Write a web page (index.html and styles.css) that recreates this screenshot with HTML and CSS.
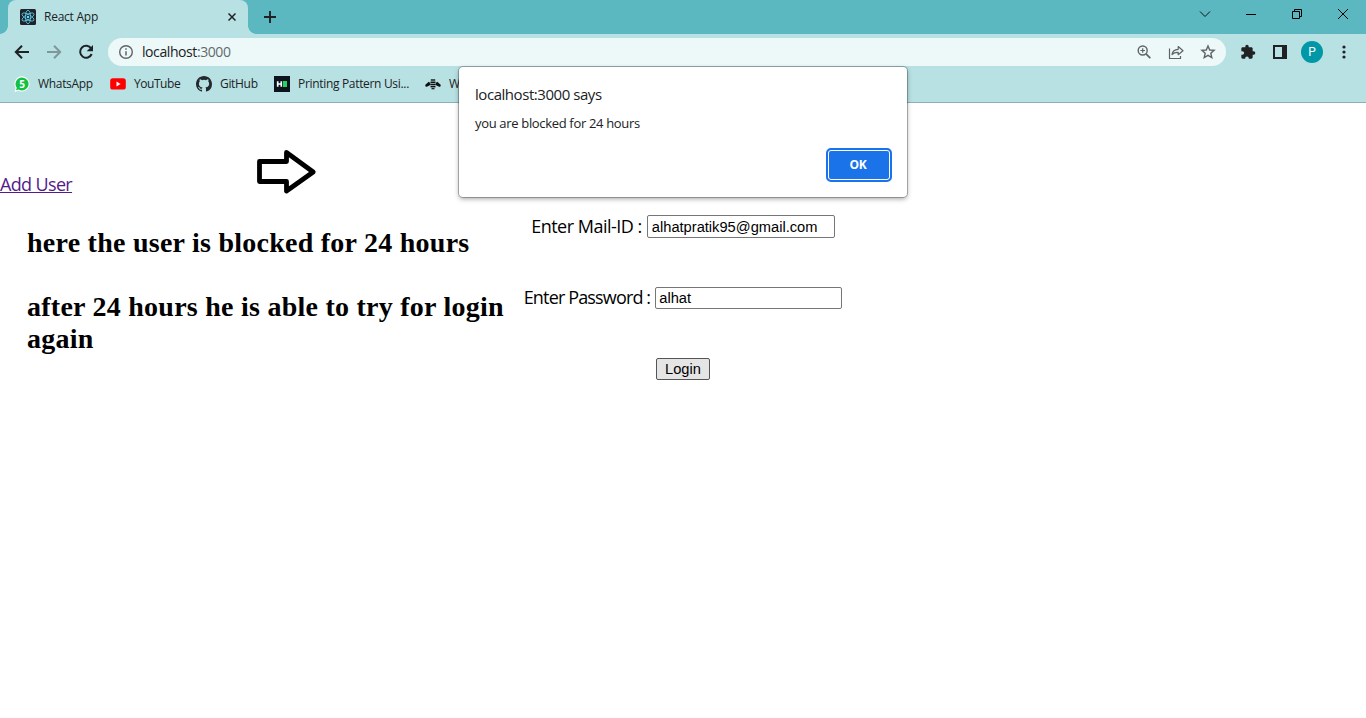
FILE: index.html
```html
<!DOCTYPE html>
<html lang="en">
<head>
<meta charset="utf-8">
<title>React App</title>
<link rel="stylesheet" href="styles.css">
</head>
<body>
<header class="browser">
  <div class="tabstrip">
    <div class="tab">
      <svg class="favicon" width="16" height="16" viewBox="0 0 16 16"><rect width="16" height="16" rx="1.5" fill="#20232a"/><g fill="none" stroke="#61dafb" stroke-width=".75"><ellipse cx="8" cy="8" rx="6.700" ry="2.600" transform="rotate(30 8 8)"/><ellipse cx="8" cy="8" rx="6.700" ry="2.600" transform="rotate(90 8 8)"/><ellipse cx="8" cy="8" rx="6.700" ry="2.600" transform="rotate(150 8 8)"/></g><circle cx="8" cy="8" r="1.300" fill="#61dafb"/></svg>
      <span class="tab-title">React App</span>
      <svg class="tab-close" width="8" height="8" viewBox="0 0 8 8"><path d="M.5.5l7 7M7.5.5l-7 7" stroke="#202124" stroke-width="1.5"/></svg>
    </div>
    <svg class="new-tab" width="12" height="12" viewBox="0 0 12 12"><path d="M6 0v12M0 6h12" stroke="#202124" stroke-width="1.9"/></svg>
    <div class="window-controls">
      <svg width="12" height="12" viewBox="0 0 12 12"><path d="M1 3.5l5 5 5-5" fill="none" stroke="#111"/></svg>
      <svg width="12" height="12" viewBox="0 0 12 12"><path d="M1 6.5h10" stroke="#000"/></svg>
      <svg width="12" height="12" viewBox="0 0 12 12"><path d="M1.500 3.500h7v7h-7zM3.500 3.500v-2h7v7h-2" fill="none" stroke="#000"/></svg>
      <svg width="12" height="12" viewBox="0 0 12 12"><path d="M1 1l10 10M11 1L1 11" stroke="#000"/></svg>
    </div>
  </div>
  <div class="toolbar">
    <svg class="back" width="16" height="16" viewBox="0 0 16 16"><path d="M15 8H2.200M8 1.700L1.800 8 8 14.300" fill="none" stroke="#202124" stroke-width="2"/></svg>
    <svg class="forward" width="16" height="16" viewBox="0 0 16 16"><path d="M1 8h12.800M8 1.700L14.200 8 8 14.300" fill="none" stroke="#7f979a" stroke-width="2"/></svg>
    <svg class="reload" width="16" height="16" viewBox="0 0 16 16"><path d="M13.200 4.500A6 6 0 1 0 13.700 10" fill="none" stroke="#202124" stroke-width="2"/><path d="M15 1v6.300H8.700z" fill="#202124"/></svg>
    <div class="omnibox">
      <svg width="14" height="14" viewBox="0 0 14 14"><circle cx="7" cy="7" r="6.300" fill="none" stroke="#5f6368" stroke-width="1.400"/><path d="M7 6.200v4.300M7 3.300v1.500" stroke="#5f6368" stroke-width="1.500"/></svg>
      <span class="url">localhost<span class="port">:3000</span></span>
      <div class="omni-actions">
        <svg width="14" height="14" viewBox="0 0 14 14"><g fill="none" stroke="#5f6368"><circle cx="5.700" cy="5.500" r="4.500" stroke-width="1.400"/><path d="M9 8.800l4.300 4.300" stroke-width="1.700"/><path d="M5.700 3.200v4.600M3.400 5.500H8" stroke-width="1.200"/></g></svg>
        <svg width="16" height="14" viewBox="0 0 16 14"><path d="M1.500 3.500v10h11v-2.500M4 9.500c.5-3.300 2.500-5 6.200-5.200V1.500L15 5.700l-4.800 4V7.300C7.700 7.200 5.500 7.800 4 9.500z" fill="none" stroke="#5f6368" stroke-width="1.200" stroke-linejoin="round"/></svg>
        <svg width="16" height="16" viewBox="0 0 16 16"><path d="M8 2l1.700 4 4.400.4-3.300 2.900 1 4.200L8 11.300l-3.800 2.200 1-4.200-3.300-2.900L6.300 6z" fill="none" stroke="#5f6368" stroke-width="1.400"/></svg>
      </div>
    </div>
    <svg class="extensions" width="16" height="16" viewBox="0 0 24 24"><path fill="#202124" d="M20.500 11H19V7c0-1.100-.9-2-2-2h-4V3.500a2.500 2.500 0 0 0-5 0V5H4c-1.100 0-2 .9-2 2v3.800h1.500a2.700 2.700 0 0 1 0 5.400H2V20c0 1.100.9 2 2 2h3.800v-.5a2.700 2.700 0 0 1 5.400 0v.5H17c1.100 0 2-.9 2-2v-4h1.500a2.500 2.500 0 0 0 0-5z"/></svg>
    <svg class="side-panel" width="14" height="14" viewBox="0 0 14 14"><path fill="#202124" fill-rule="evenodd" d="M0 0h14v14H0zM2 2v10h7V2z"/></svg>
    <span class="avatar">P</span>
    <svg class="kebab" width="4" height="14" viewBox="0 0 4 14"><g fill="#202124"><circle cx="2" cy="2" r="1.600"/><circle cx="2" cy="7" r="1.600"/><circle cx="2" cy="12" r="1.600"/></g></svg>
  </div>
  <nav class="bookmarks">
    <span class="bookmark whatsapp"><svg width="16" height="16" viewBox="0 0 16 16"><path d="M8 .3a7.600 7.600 0 1 1-3.500 14.400L.5 16l1.200-4A7.600 7.600 0 0 1 8 .3z" fill="#fff"/><path d="M8 1.500a6.500 6.500 0 1 1-3.400 12L2 14.300l.8-2.500A6.500 6.500 0 0 1 8 1.500z" fill="#12c143"/><text x="8" y="11.800" class="badge-digit">5</text></svg><span>WhatsApp</span></span>
    <span class="bookmark youtube"><svg width="16" height="16" viewBox="0 0 16 16"><rect x=".2" y="2.300" width="15.600" height="11.200" rx="2.600" fill="#f00"/><path d="M6.500 5.600v4.800L10.600 8z" fill="#fff"/></svg><span>YouTube</span></span>
    <span class="bookmark github"><svg width="16" height="16" viewBox="0 0 16 16"><path fill="#24292f" d="M8 0C3.580 0 0 3.580 0 8c0 3.540 2.290 6.530 5.470 7.590.4.070.55-.17.55-.38 0-.19-.01-.82-.01-1.490-2.010.37-2.530-.49-2.690-.94-.09-.23-.48-.94-.82-1.130-.28-.15-.68-.52-.01-.53.63-.01 1.080.58 1.230.82.72 1.210 1.870.87 2.330.66.070-.52.28-.87.51-1.070-1.780-.2-3.640-.89-3.640-3.950 0-.87.31-1.590.82-2.150-.08-.2-.36-1.020.08-2.120 0 0 .67-.21 2.200.82a7.700 7.700 0 0 1 4 0c1.530-1.040 2.200-.82 2.200-.82.44 1.100.16 1.920.08 2.120.51.56.82 1.270.82 2.150 0 3.070-1.870 3.750-3.650 3.950.29.25.54.73.54 1.480 0 1.070-.01 1.930-.01 2.200 0 .21.15.46.55.38A8.010 8.010 0 0 0 16 8c0-4.420-3.580-8-8-8z"/></svg><span>GitHub</span></span>
    <span class="bookmark pattern"><svg width="16" height="16" viewBox="0 0 16 16"><rect width="16" height="16" fill="#0e141e"/><path d="M3.700 5.200v5.600M7.300 5.200v5.600M3.700 8h3.600" stroke="#fff" stroke-width="1.700"/><rect x="9" y="5" width="4" height="6" fill="#1ed75f"/></svg><span>Printing Pattern Usi...</span></span>
    <span class="bookmark bee"><svg width="16" height="16" viewBox="0 0 16 16"><g fill="#111"><path d="M5.200 7L3.700 5.700.4 8.700c-.6 1.600.9 2.300 2.200 1.800L5.200 9zM10.800 7l1.500-1.300 3.300 3c.6 1.600-.9 2.300-2.200 1.800L10.800 9z"/><path d="M5.800 3.300h4.400v1.400H5.800z"/><rect x="5.500" y="5.500" width="5" height="1.500"/><rect x="5.300" y="7.700" width="5.400" height="1.500"/><rect x="5.500" y="9.900" width="5" height="1.500"/><rect x="6.500" y="12.100" width="3" height="1.200"/></g></svg><span>W</span></span>
  </nav>
</header>

<main class="page">
  <div class="top-row">
    <a class="add-user" href="#">Add User</a>
    <svg class="arrow" width="60" height="46" viewBox="0 0 60 46"><path d="M2.500 12.500h27V3.500L56.200 23 29.500 42V32.500h-27z" fill="none" stroke="#000" stroke-width="4.800" stroke-linejoin="round"/></svg>
  </div>
  <div class="content">
    <section class="notes">
      <h2>here the user is blocked for 24 hours</h2>
      <h2>after 24 hours he is able to try for login again</h2>
    </section>
    <form class="login">
      <label class="field mail"><span>Enter Mail-ID :</span><input type="text" value="alhatpratik95@gmail.com"></label>
      <label class="field password"><span>Enter Password :</span><input type="text" value="alhat"></label>
      <button class="submit" type="button">Login</button>
    </form>
  </div>
</main>

<div class="dialog" role="alertdialog">
  <div class="dialog-title">localhost:3000 says</div>
  <div class="dialog-text">you are blocked for 24 hours</div>
  <button class="ok" type="button">OK</button>
</div>
</body>
</html>
```

FILE: styles.css
```css
* { box-sizing: border-box; }
body {
  margin: 0;
  height: 718px;
  overflow: hidden;
  background: #fff;
  color: #000;
  font-family: "Open Sans", "Noto Sans", sans-serif;
}
svg { display: block; flex: none; }

.browser { height: 103px; background: #b8e1e4; border-bottom: 1px solid #8fb0b3; color: #202124; }
.tabstrip { display: flex; height: 34px; background: #5bb8c1; padding-left: 8px; }
.tab {
  position: relative;
  display: flex;
  align-items: center;
  width: 240px;
  height: 34px;
  padding: 0 12px;
  border-radius: 8px 8px 0 0;
  background: #b8e1e4;
}
.tab::before, .tab::after {
  content: "";
  position: absolute;
  bottom: 0;
  width: 8px;
  height: 8px;
}
.tab::before { left: -8px; background: radial-gradient(circle at 0 0, transparent 7.5px, #b8e1e4 8px); }
.tab::after { right: -8px; background: radial-gradient(circle at 100% 0, transparent 7.5px, #b8e1e4 8px); }
.tab-title { margin-left: 8px; padding-bottom: 1px; font-size: 12px; letter-spacing: -.25px; }
.tab-close { margin-left: auto; }
.new-tab { margin: 11px 0 0 16px; }
.window-controls { display: flex; gap: 34px; margin: 8px 17px 0 auto; }

.toolbar { display: flex; align-items: center; height: 34px; padding: 2px 19px 0 14px; }
.forward, .reload { margin-left: 16px; }
.omnibox {
  display: flex;
  flex: none;
  align-items: center;
  width: 1118px;
  height: 28px;
  margin-left: 14px;
  padding: 0 10px 0 11px;
  border-radius: 14px;
  background: #edf8f8;
}
.url { margin-left: 9px; font-size: 14px; line-height: 20px; letter-spacing: -.42px; }
.port { color: #5f6b6d; }
.omni-actions { display: flex; align-items: center; gap: 16px; margin-left: auto; }
.omni-actions svg:first-child { margin-right: 1px; }
.extensions { margin-left: 14px; }
.side-panel { margin-left: 17px; }
.avatar {
  flex: none;
  width: 22px;
  height: 22px;
  margin-left: 14px;
  border-radius: 50%;
  background: #0097a7;
  color: #fff;
  font: 12px/22px Roboto, sans-serif;
  text-align: center;
}
.kebab { margin-left: 19px; }

.bookmarks { display: flex; height: 34px; padding: 0 0 2px 14px; align-items: center; font-size: 12px; }
.bookmark { display: flex; align-items: center; gap: 8px; flex: none; white-space: nowrap; letter-spacing: -.32px; }
.bookmark > span { padding-bottom: 1px; }
.whatsapp { width: 96px; }
.youtube { width: 86px; letter-spacing: -.45px; }
.github { width: 78px; }
.pattern { width: 151px; }
.badge-digit { font: bold 10px "Open Sans", sans-serif; fill: #fff; text-anchor: middle; letter-spacing: 0; }

.top-row { display: flex; height: 93px; padding-top: 46px; }
.add-user { width: 72px; margin-top: 23px; color: #551a8b; font-size: 18px; line-height: 25px; letter-spacing: -.65px; white-space: nowrap; }
.arrow { margin-left: 185px; }
.content { display: grid; grid-template-columns: 510px 346px; }
.notes { padding: 31px 0 0 27px; font-family: "Liberation Serif", serif; }
.notes h2 { margin: 0 -10px 32px 0; font-size: 28px; line-height: 32px; font-weight: bold; letter-spacing: .25px; }
.login { display: flex; flex-direction: column; align-items: center; padding-top: 19px; }
.field { display: flex; align-items: center; gap: 5px; font-size: 18px; line-height: 22px; letter-spacing: -.5px; white-space: nowrap; }
.field span { padding-bottom: 2px; }
.mail { height: 23px; }
.field input {
  width: 188px;
  height: 23px;
  padding: 1px 4px;
  border: 1px solid #767676;
  border-radius: 2px;
  font: 14.667px "Liberation Sans", Arial, sans-serif;
  letter-spacing: 0;
}
.password { height: 22px; margin-top: 49px; letter-spacing: -.85px; }
.password input { width: 187px; height: 22px; padding: 1px 3px; }
.submit {
  width: 54px;
  height: 22px;
  margin-top: 49px;
  padding: 0;
  border: 1px solid #555;
  border-radius: 2px;
  background: #e5e5e5;
  font: 14.667px/20px "Liberation Sans", Arial, sans-serif;
}

.dialog {
  position: absolute;
  left: 459px;
  top: 67px;
  width: 448px;
  height: 130px;
  padding: 15px 16px 16px;
  border-radius: 4px;
  background: #fff;
  box-shadow: 0 0 0 1px rgba(0, 0, 0, .25), 0 2px 5px rgba(0, 0, 0, .35);
  color: #202124;
}
.dialog-title { font-size: 15px; line-height: 24px; letter-spacing: -.45px; }
.dialog-text { margin-top: 7px; font-size: 13px; line-height: 20px; letter-spacing: -.33px; }
.ok {
  display: block;
  width: 66px;
  height: 34px;
  margin: 15px -1px 0 auto;
  padding: 0 2px 1px 0;
  border: 2px solid #1a73e8;
  border-radius: 5px;
  background: #1a73e8;
  box-shadow: inset 0 0 0 1px #fff;
  color: #fff;
  font: bold 12px "Open Sans", sans-serif;
  letter-spacing: -.3px;
}
```
